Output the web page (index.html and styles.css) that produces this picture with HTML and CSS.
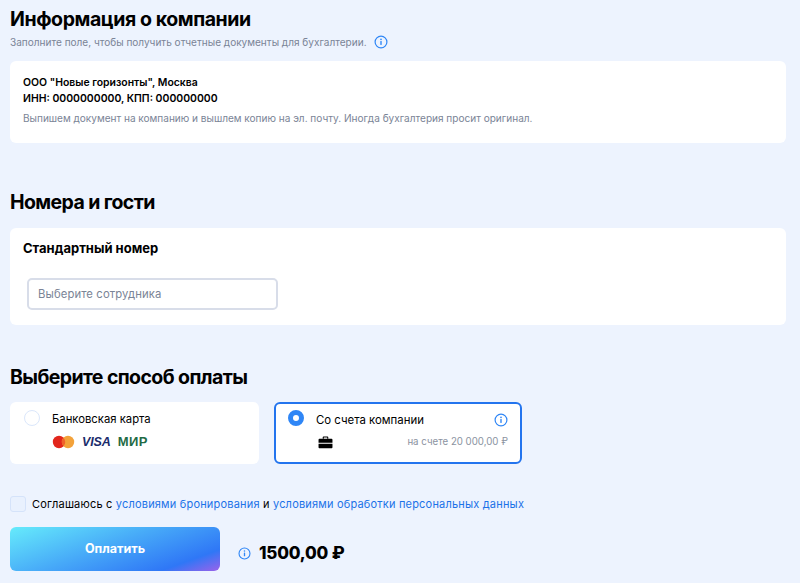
FILE: index.html
```html
<!DOCTYPE html>
<html lang="ru">
<head>
<meta charset="utf-8">
<title>Оплата</title>
<link rel="stylesheet" href="styles.css">
</head>
<body>
<main class="page">
  <section class="sec-company">
    <h1 class="title">Информация о компании</h1>
    <p class="subtitle">Заполните поле, чтобы получить отчетные документы для бухгалтерии.
      <svg class="info info-sub" viewBox="0 0 14 14"><circle cx="7" cy="7" r="5.9" fill="none" stroke="#2f86f6" stroke-width="1.2"/><rect x="6.3" y="6" width="1.4" height="4" rx=".4" fill="#2f86f6"/><circle cx="7" cy="4.3" r=".85" fill="#2f86f6"/></svg>
    </p>
    <div class="card company">
      <p class="strong">ООО "Новые горизонты", Москва</p>
      <p class="strong">ИНН: 0000000000, КПП: 000000000</p>
      <p class="note">Выпишем документ на компанию и вышлем копию на эл. почту. Иногда бухгалтерия просит оригинал.</p>
    </div>
  </section>

  <section class="sec-rooms">
    <h2 class="title section-title">Номера и гости</h2>
    <div class="card rooms">
      <h3 class="room-name">Стандартный номер</h3>
      <div class="select">Выберите сотрудника</div>
    </div>
  </section>

  <section class="sec-pay">
    <h2 class="title section-title">Выберите способ оплаты</h2>
    <div class="methods">
      <div class="method">
        <span class="radio"></span>
        <div class="method-body">
          <div class="method-name">Банковская карта</div>
          <div class="brands">
            <svg class="mc" viewBox="0 0 23 14"><circle cx="7" cy="7" r="6.2" fill="#e2261c"/><circle cx="16" cy="7" r="6.2" fill="#f3a23a"/><path d="M11.5 2.7a6.2 6.2 0 0 1 0 8.6a6.2 6.2 0 0 1 0-8.6z" fill="#f0622a"/></svg>
            <span class="visa">VISA</span>
            <span class="mir">МИР</span>
          </div>
        </div>
      </div>
      <div class="method active">
        <span class="radio on"></span>
        <div class="method-body">
          <div class="method-top">
            <span class="method-name">Со счета компании</span>
            <svg class="info" viewBox="0 0 14 14"><circle cx="7" cy="7" r="5.9" fill="none" stroke="#2f86f6" stroke-width="1.2"/><rect x="6.3" y="6" width="1.4" height="4" rx=".4" fill="#2f86f6"/><circle cx="7" cy="4.3" r=".85" fill="#2f86f6"/></svg>
          </div>
          <div class="method-bottom">
            <svg class="case" viewBox="0 0 16 14"><path d="M5 3V1.600C5 .9 5.500 .5 6.100 .5h3.800c.6 0 1.100 .4 1.100 1.100V3H9.800V1.700H6.200V3z" fill="#000"/><path d="M1.500 3h13c.6 0 1 .4 1 1v3.300H.5V4c0-.6 .4-1 1-1zM.5 8.300h15V12c0 .7-.5 1.200-1.200 1.200H1.700C1 13.200 .5 12.700 .5 12z" fill="#000"/></svg>
            <span class="balance">на счете 20 000,00 ₽</span>
          </div>
        </div>
      </div>
    </div>
  </section>

  <div class="agree">
    <span class="check"></span>
    <span class="agree-text">Соглашаюсь с <a href="#">условиями бронирования</a> и <a href="#">условиями обработки персональных данных</a></span>
  </div>

  <div class="footer">
    <button class="pay" type="button">Оплатить</button>
    <svg class="info info-price" viewBox="0 0 14 14"><circle cx="7" cy="7" r="5.9" fill="none" stroke="#2f86f6" stroke-width="1.2"/><rect x="6.3" y="6" width="1.4" height="4" rx=".4" fill="#2f86f6"/><circle cx="7" cy="4.3" r=".85" fill="#2f86f6"/></svg>
    <span class="price">1500,00 ₽</span>
  </div>
</main>
</body>
</html>
```
FILE: styles.css
```css
* { box-sizing: border-box; }
html, body { margin: 0; height: 100%; }
body {
  background: #edf3fe;
  font-family: Inter, "Noto Sans", sans-serif;
  color: #000;
  overflow: hidden;
}
.page { padding: 7px 14px 0 10px; width: 800px; }
p, h1, h2, h3 { margin: 0; }
.title { font-size: 19.500px; line-height: 24px; font-weight: 700; letter-spacing: -.42px; }
.section-title { letter-spacing: -.6px; }
.subtitle {
  margin-top: 4px;
  font-size: 10.050px;
  line-height: 14px;
  color: #7a8496;
  display: flex;
  align-items: center;
  gap: 7px;
}
.info { width: 14px; height: 14px; flex: none; }
.card { background: #fff; border-radius: 6px; }
.company { margin-top: 12px; height: 82px; padding: 14px 13px; }
.strong { font-size: 10.450px; line-height: 16px; font-weight: 600; }
.note { margin-top: 4px; font-size: 10.050px; line-height: 14px; color: #7a8496; }
.sec-rooms { margin-top: 47px; }
.rooms { margin-top: 14px; height: 97px; padding: 12px 13px; }
.room-name { font-size: 13px; line-height: 16px; font-weight: 700; }
.select {
  margin: 22px 0 0 4px;
  width: 251px;
  height: 32px;
  border: 2px solid #d8dde9;
  border-radius: 5px;
  padding: 0 9px;
  font-size: 11.300px;
  line-height: 28px;
  color: #7a8496;
  letter-spacing: .1px;
}
.sec-pay { margin-top: 40px; }
.methods { display: flex; gap: 15px; margin-top: 13px; }
.method {
  background: #fff;
  border-radius: 6px;
  width: 249px;
  height: 62px;
  display: flex;
  padding: 9px 14px 0;
  gap: 12px;
}
.method.active { width: 248px; border: 2px solid #2374ee; padding: 5px 12px 0; gap: 12px; }
.radio {
  width: 16px; height: 16px; flex: none;
  border-radius: 50%;
  border: 1.500px solid #dbe7fb;
  background: #fff;
  margin-top: -1px;
}
.radio.on { border: 5px solid #2f86f6; margin-top: 1px; }
.method-body { flex: 1; min-width: 0; }
.method-name { font-size: 11.300px; line-height: 16px; color: #000; }
.brands { display: flex; align-items: center; margin-top: 8px; height: 14px; }
.mc { width: 23px; height: 14px; }
.visa {
  margin-left: 7px;
  font: italic 700 12.500px/14px "Liberation Sans", sans-serif;
  color: #1a2c6b;
  letter-spacing: -.1px;
}
.mir {
  margin-left: 7px;
  font: 700 13px/14px "Liberation Sans", sans-serif;
  color: #1f6b45;
  letter-spacing: .4px;
}
.method-top { display: flex; justify-content: space-between; align-items: center; height: 16px; margin-top: 3px; }
.active .method-name { font-size: 11.400px; }
.method-bottom { display: flex; justify-content: space-between; align-items: center; margin-top: 7px; }
.case { width: 15px; height: 13px; margin-left: 2px; }
.balance { font-size: 9.700px; line-height: 14px; color: #8b93a1; }
.agree {
  display: flex;
  align-items: center;
  gap: 6px;
  margin-top: 31px;
  font-size: 11px;
  line-height: 16px;
  letter-spacing: .19px;
}
.agree-text { padding-top: 1px; margin-left: 0; }
.check {
  width: 16px; height: 16px;
  border: 1.500px solid #d5e3fa;
  border-radius: 3px;
  background: #e9f1fe;
}
.agree a { color: #1b72e8; text-decoration: none; }
.footer { display: flex; align-items: center; margin-top: 15px; }
.pay {
  width: 210px;
  height: 44px;
  border: 0;
  border-radius: 6px;
  background: linear-gradient(160deg, #66ebfb 0%, #47aaf8 45%, #2f77f6 82%, #9b62ea 100%);
  color: #fff;
  font: 700 12.500px/16px Inter, sans-serif;
  padding: 0;
}
.info-price { margin: 8px 0 0 18px; width: 13px; height: 13px; }
.price { margin: 8px 0 0 8px; font-size: 17px; line-height: 20px; font-weight: 800; letter-spacing: -.2px; }
```
